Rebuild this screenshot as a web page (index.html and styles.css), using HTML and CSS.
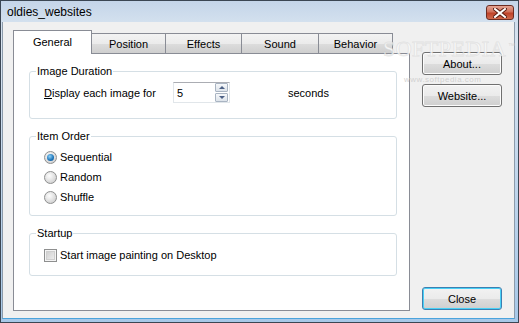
FILE: index.html
```html
<!DOCTYPE html>
<html lang="en">
<head>
    <meta charset="UTF-8">
    <title>oldies_websites</title>
    <link rel="stylesheet" href="styles.css">
</head>
<body>
    <div class="window">
        <div class="titlebar">
            <span class="title">oldies_websites</span>
            <span class="close-x">
                <svg width="14" height="10" viewBox="0 0 14 10">
                    <path d="M2 1 L12 9 M12 1 L2 9" stroke="#5a1c12" stroke-width="4" stroke-linecap="square"/>
                    <path d="M2 1 L12 9 M12 1 L2 9" stroke="#fff" stroke-width="2" stroke-linecap="square"/>
                </svg>
            </span>
        </div>
        <div class="client">
            <div class="tabs">
                <div class="tab-row">
                    <div class="tab active">General</div>
                    <div class="tab t-pos">Position</div>
                    <div class="tab t-eff">Effects</div>
                    <div class="tab t-snd">Sound</div>
                    <div class="tab t-beh">Behavior</div>
                </div>
                <div class="panel">
                    <fieldset class="group g-duration">
                        <legend>Image Duration</legend>
                        <div class="row">
                            <span class="lbl"><u>D</u>isplay each image for</span>
                            <span class="spin">
                                <span class="spin-val">5</span>
                                <span class="spin-btns">
                                    <span class="sb up"></span>
                                    <span class="sb down"></span>
                                </span>
                            </span>
                            <span class="unit">seconds</span>
                        </div>
                    </fieldset>
                    <fieldset class="group g-order">
                        <legend>Item Order</legend>
                        <div class="opt"><span class="radio on"></span>Sequential</div>
                        <div class="opt"><span class="radio"></span>Random</div>
                        <div class="opt"><span class="radio"></span>Shuffle</div>
                    </fieldset>
                    <fieldset class="group g-startup">
                        <legend>Startup</legend>
                        <div class="opt"><span class="check"></span>Start image painting on Desktop</div>
                    </fieldset>
                </div>
            </div>
            <div class="side">
                <button class="btn">About...</button>
                <button class="btn">Website...</button>
                <div class="spacer"></div>
                <button class="btn default">Close</button>
            </div>
        </div>
        <div class="watermark">
            <span class="wm-big">SOFTPEDIA</span>
            <span class="wm-tm">™</span>
        </div>
        <span class="wm-url">www.softpedia.com</span>
    </div>
</body>
</html>
```

FILE: styles.css
```css
body {
    margin: 0;
    font-family: "Liberation Sans", Arial, sans-serif;
    font-size: 11px;
    color: #000;
}
.window {
    position: relative;
    width: 519px;
    height: 323px;
    box-sizing: border-box;
    border: 1px solid #3b4653;
    background: linear-gradient(#c6d7ea, #d9e4f0 40px, #a7c8e8);
    padding: 0 3px 3px 1px;
    display: flex;
    flex-direction: column;
}
.titlebar {
    height: 21px;
    flex: none;
    display: flex;
    align-items: center;
    justify-content: space-between;
    padding: 0 4px 0 6px;
    margin-left: -1px;
    margin-right: -3px;
    background: linear-gradient(#c4d5e9, #d3e0ee);
}
.title {
    font-size: 12px;
    color: #000;
    margin-top: 1px;
}
.close-x {
    width: 26px;
    height: 13px;
    margin-top: 2px;
    border: 1px solid #6c2c22;
    border-radius: 3px;
    background: linear-gradient(#e4a494, #d0705a 45%, #bf4229 55%, #cf6a4e);
    display: flex;
    align-items: center;
    justify-content: center;
}
.client {
    flex: 1;
    display: flex;
    background: #f0f0f0;
    border-left: 1px solid #8c9bab;
    border-right: 1px solid #8c9bab;
    border-bottom: 1px solid #4aa3dc;
    padding: 8px 0 7px 10px;
}
.tabs {
    width: 397px;
    display: flex;
    flex-direction: column;
}
.tab-row {
    height: 23px;
    display: flex;
    align-items: flex-end;
}
.tab {
    box-sizing: border-box;
    height: 20px;
    border: 1px solid #898c95;
    border-bottom: none;
    border-left: none;
    background: linear-gradient(#f3f3f3, #ebebeb 50%, #dddddd 51%, #cfcfcf);
    display: flex;
    align-items: center;
    justify-content: center;
    padding-top: 1px;
}
.tab.active {
    width: 79px;
    height: 24px;
    margin-bottom: -1px;
    border-left: 1px solid #898c95;
    background: #fff;
    position: relative;
    z-index: 1;
    padding-top: 0;
    padding-bottom: 2px;
}
.t-pos { width: 74px; }
.t-eff { width: 76px; }
.t-snd { width: 77px; }
.t-beh { width: 74px; }
.panel {
    height: 258px;
    box-sizing: border-box;
    background: #fff;
    border: 1px solid #898c95;
    padding: 11px 12px 0 15px;
    display: flex;
    flex-direction: column;
    gap: 11px;
}
.group {
    margin: 0;
    box-sizing: border-box;
    border: 1px solid #d5dfe5;
    border-radius: 3px;
    padding: 0 0 0 14px;
    min-width: 0;
}
.group legend {
    padding: 0 1px;
    margin-left: -8px;
    line-height: 13px;
    color: #000;
}
.g-duration { height: 54px; }
.g-order { height: 86px; }
.g-startup { height: 49px; }
.row {
    display: flex;
    align-items: center;
    margin-top: 4px;
}
.lbl { width: 129px; }
.spin {
    box-sizing: border-box;
    width: 57px;
    height: 21px;
    border: 1px solid #e1e6ea;
    border-top-color: #abadb3;
    display: flex;
    align-items: center;
    justify-content: space-between;
    padding: 0 1px 0 3px;
}
.spin-btns {
    display: flex;
    flex-direction: column;
    gap: 1px;
}
.sb {
    width: 11px;
    height: 7px;
    border: 1px solid #a9b4c2;
    border-radius: 1px;
    background: linear-gradient(#f6f8fa, #dde3ea);
    position: relative;
}
.sb::after {
    content: "";
    position: absolute;
    left: 3px;
    width: 0;
    height: 0;
    border-left: 3px solid transparent;
    border-right: 3px solid transparent;
}
.sb.up::after { top: 2px; border-bottom: 3px solid #4d6185; }
.sb.down::after { top: 2px; border-top: 3px solid #4d6185; }
.unit { margin-left: 58px; }
.g-order .opt:first-of-type { margin-top: 4px; }
.g-startup .opt { margin-top: 5px; }
.opt {
    height: 20px;
    display: flex;
    align-items: center;
}
.radio {
    box-sizing: border-box;
    width: 13px;
    height: 13px;
    border-radius: 50%;
    border: 1px solid #8e8f8f;
    background: radial-gradient(circle at 40% 35%, #fdfdfd, #d6d6d6 70%, #c4c4c4);
    margin-right: 3px;
    position: relative;
}
.radio.on::after {
    content: "";
    position: absolute;
    left: 2px;
    top: 2px;
    width: 7px;
    height: 7px;
    border-radius: 50%;
    background: radial-gradient(circle at 40% 35%, #8fd2f8, #1b73b8 60%, #0d4f8c);
}
.check {
    box-sizing: border-box;
    width: 13px;
    height: 13px;
    border: 1px solid #8e8f8f;
    background: linear-gradient(135deg, #c9c9c9, #f4f4f4);
    box-shadow: inset 0 0 0 1px #f4f4f4, inset 0 0 0 2px #cfcfcf;
    margin-right: 3px;
}
.side {
    width: 80px;
    margin-left: 12px;
    display: flex;
    flex-direction: column;
    padding-top: 22px;
    padding-bottom: 1px;
    gap: 9px;
}
.spacer { flex: 1; }
.btn {
    height: 23px;
    box-sizing: border-box;
    font-family: "Liberation Sans", Arial, sans-serif;
    font-size: 11px;
    color: #000;
    border: 1px solid #707070;
    border-radius: 3px;
    background: linear-gradient(#f2f2f2, #ebebeb 50%, #dddddd 51%, #cfcfcf);
    box-shadow: inset 0 0 0 1px #fcfcfc;
    padding: 0;
}
.btn.default {
    border-color: #3c7fb1;
    box-shadow: inset 0 0 0 1px #48d0f6;
}
.watermark {
    position: absolute;
    left: 382px;
    top: 40px;
    width: 132px;
    height: 16px;
    z-index: 5;
    pointer-events: none;
}
.wm-big {
    position: absolute;
    left: 0;
    top: 0;
    font-family: "Liberation Serif", serif;
    font-size: 22px;
    line-height: 16px;
    letter-spacing: 0.5px;
    color: rgba(255, 255, 255, 0.8);
    -webkit-text-stroke: 1px rgba(200, 200, 200, 0.4);
}
.wm-tm {
    position: absolute;
    right: 0;
    top: 1px;
    font-size: 7px;
    line-height: 7px;
    color: rgba(205, 205, 205, 0.7);
}
.wm-url {
    position: absolute;
    left: 403px;
    top: 75px;
    font-size: 8px;
    line-height: 8px;
    letter-spacing: 0.5px;
    color: rgba(200, 200, 200, 0.8);
    z-index: 5;
}
```
